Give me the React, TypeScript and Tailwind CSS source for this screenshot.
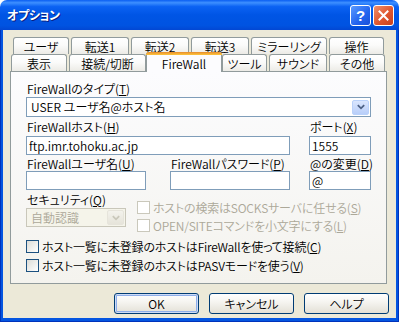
import React from "react";

const font = "font-['Noto_Sans_CJK_JP','Noto_Sans_CJK_SC',sans-serif] [font-feature-settings:'palt'] font-[350]";

function Tab({ label, w }: { label: React.ReactNode; w: string }) {
  return (
    <div
      className={`${w} h-[17px] shrink-0 border border-b-0 border-[#919B9C] rounded-t-[3px] bg-[linear-gradient(#FFFFFF,#FBFBFA_45%,#ECEBE6)] flex items-center justify-center text-[12px] leading-[14px] text-black pt-[1px]`}
    >
      {label}
    </div>
  );
}

function ActiveTab({ label, w }: { label: string; w: string }) {
  return (
    <div className={`${w} h-[20px] shrink-0 relative top-[1px] z-10 flex flex-col bg-[#FCFCFE] border-x border-[#919B9C] rounded-t-[3px]`}>
      <div className="h-[3px] -mx-px rounded-t-[3px] bg-[linear-gradient(#E68B2C,#FFC73C)]" />
      <div className="flex-1 flex items-center justify-center text-[12px] leading-[14px] text-black">{label}</div>
    </div>
  );
}

function Arrow({ disabled }: { disabled?: boolean }) {
  return (
    <div
      className={`w-[17px] h-[15px] my-auto mr-[1px] rounded-[2px] border flex items-center justify-center ${
        disabled
          ? "border-[#E6E4DB] bg-[linear-gradient(#F3F2EC,#E6E4DA)]"
          : "border-[#B9D1FA] bg-[linear-gradient(#DAE6FE,#B8CEF9)]"
      }`}
    >
      <svg width="8" height="6" viewBox="0 0 8 6">
        <path
          d="M0.8 1.2 L4 4.3 L7.2 1.2"
          fill="none"
          stroke={disabled ? "#C9C7BA" : "#4D6185"}
          strokeWidth="1.8"
        />
      </svg>
    </div>
  );
}

function Label({ children, disabled }: { children: React.ReactNode; disabled?: boolean }) {
  return (
    <div className={`h-[14px] pl-px text-[12px] leading-[14px] whitespace-nowrap ${disabled ? "text-[#ACA899]" : "text-black"}`}>
      {children}
    </div>
  );
}

function Edit({ w, value }: { w: string; value?: string }) {
  return (
    <div className={`${w} h-[19px] border border-[#7F9DB9] bg-white pl-[2px] text-[12px] leading-[17px] text-black whitespace-nowrap`}>
      {value}
    </div>
  );
}

function Check({ children, disabled }: { children: React.ReactNode; disabled?: boolean }) {
  return (
    <div className="h-[13px] flex items-center gap-[3px] whitespace-nowrap">
      <div
        className={`w-[13px] h-[13px] border ${
          disabled ? "border-[#CAC8BB] bg-white" : "border-[#1C5180] bg-[linear-gradient(135deg,#DCDCD7,#FFFFFF)]"
        }`}
      />
      <span className={`text-[12px] leading-[14px] tracking-[-0.2px] ${disabled ? "text-[#ACA899]" : "text-black"}`}>{children}</span>
    </div>
  );
}

function Button({ children, primary }: { children: React.ReactNode; primary?: boolean }) {
  return (
    <div
      className={`w-[85px] h-[21px] rounded-[3px] border border-[#003C74] bg-[linear-gradient(#FFFFFF,#F6F5F1_40%,#E3E0D6)] flex items-center justify-center text-[12px] leading-[14px] text-black ${
        primary ? "shadow-[inset_0_0_0_1px_#CEDCF6,inset_0_0_0_2px_#8EAEE9]" : ""
      }`}
    >
      {children}
    </div>
  );
}

export default function App() {
  return (
    <div className={`w-[399px] h-[322px] flex flex-col bg-white overflow-hidden ${font}`}>
      {/* title bar */}
      <div className="h-[30px] shrink-0 rounded-t-[7px] bg-[linear-gradient(#0A5EF2_0%,#3D8FFF_9%,#0B62F3_22%,#0055E5_50%,#0053E1_85%,#0247D3_100%)] flex items-center pl-[7px] pr-[5px]">
        <span className="text-white font-bold text-[12px] leading-[14px] [text-shadow:1px_1px_0_#0A1E80] tracking-[-0.3px]">
          オプション
        </span>
        <div className="ml-auto flex gap-[2px] mt-[1px]">
          <div className="w-[21px] h-[21px] rounded-[3px] border border-white bg-[linear-gradient(135deg,#5A9BFF,#2263EE_60%,#1A4FD8)] flex items-center justify-center text-white font-bold text-[15px] leading-none font-['Liberation_Sans',sans-serif]">
            ?
          </div>
          <div className="w-[21px] h-[21px] rounded-[3px] border border-white bg-[linear-gradient(135deg,#F0906C,#E0562F_55%,#C8401C)] flex items-center justify-center">
            <svg width="11" height="11" viewBox="0 0 11 11">
              <path d="M1.5 1.5 L9.5 9.5 M9.5 1.5 L1.5 9.5" stroke="white" strokeWidth="2" strokeLinecap="square" />
            </svg>
          </div>
        </div>
      </div>

      {/* frame */}
      <div className="flex-1 flex bg-[#0455E0] border-x border-b border-[#0033BB] px-[2px] pb-[3px]">
        <div className="flex-1 bg-[#ECE9D8] flex flex-col pt-[7px] px-[7px] pb-[4px]">
          {/* tabs row 1 */}
          <div className="flex gap-[2px] ml-[3px] h-[17px]">
            <Tab label="ユーザ" w="w-[56px]" />
            <Tab label="転送1" w="w-[58px]" />
            <Tab label="転送2" w="w-[58px]" />
            <Tab label="転送3" w="w-[58px]" />
            <Tab label="ミラーリング" w="w-[76px]" />
            <Tab label="操作" w="w-[55px]" />
          </div>
          {/* tabs row 2 */}
          <div className="flex items-end ml-px h-[17px]">
            <Tab label="表示" w="w-[56px]" />
            <div className="w-[2px]" />
            <Tab label="接続/切断" w="w-[77px]" />
            <ActiveTab label="FireWall" w="w-[76px]" />
            <Tab label="ツール" w="w-[45px]" />
            <div className="w-[2px]" />
            <Tab label="サウンド" w="w-[58px]" />
            <div className="w-[2px]" />
            <Tab label="その他" w="w-[56px]" />
          </div>

          {/* panel */}
          <div className="h-[213px] w-[377px] border border-[#919B9C] bg-[linear-gradient(#FCFCFE,#F4F3EE)] px-[15px] pt-[10px] flex flex-col">
            <Label>
              FireWallのタイプ(<u>T</u>)
            </Label>
            <div className="mt-px h-[20px] border border-[#7F9DB9] bg-white flex">
              <span className="flex-1 pl-[4px] text-[12px] leading-[18px] text-black">USER ユーザ名@ホスト名</span>
              <Arrow />
            </div>

            <div className="mt-[3px] flex">
              <div className="flex flex-col">
                <Label>
                  FireWallホスト(<u>H</u>)
                </Label>
                <div className="mt-[2px]">
                  <Edit w="w-[264px]" value="ftp.imr.tohoku.ac.jp" />
                </div>
              </div>
              <div className="ml-[19px] flex flex-col">
                <Label>
                  ポート(<u>X</u>)
                </Label>
                <div className="mt-[2px]">
                  <Edit w="w-[62px]" value="1555" />
                </div>
              </div>
            </div>

            <div className="mt-[2px] flex">
              <div className="flex flex-col">
                <Label>
                  FireWallユーザ名(<u>U</u>)
                </Label>
                <Edit w="w-[120px]" />
              </div>
              <div className="ml-[24px] flex flex-col">
                <Label>
                  FireWallパスワード(<u>P</u>)
                </Label>
                <Edit w="w-[120px]" />
              </div>
              <div className="ml-[19px] flex flex-col">
                <Label>
                  @の変更(<u>D</u>)
                </Label>
                <Edit w="w-[62px]" value="@" />
              </div>
            </div>

            <div className="mt-[3px] flex">
              <div className="flex flex-col w-[100px]">
                <Label>
                  セキュリティ(<u>Q</u>)
                </Label>
                <div className="mt-px h-[19px] border border-[#C9C7BA] bg-[#F5F4EA] flex">
                  <span className="flex-1 pl-[4px] text-[12px] leading-[17px] text-[#ACA899]">自動認識</span>
                  <Arrow disabled />
                </div>
              </div>
              <div className="ml-[11px] pt-[8px] flex flex-col gap-[5px]">
                <Check disabled>
                  ホストの検索はSOCKSサーバに任せる(<u>S</u>)
                </Check>
                <Check disabled>
                  OPEN/SITEコマンドを小文字にする(<u>L</u>)
                </Check>
              </div>
            </div>

            <div className="mt-[8px] flex flex-col gap-[6px]">
              <Check>
                ホスト一覧に未登録のホストはFireWallを使って接続(<u>C</u>)
              </Check>
              <Check>
                ホスト一覧に未登録のホストはPASVモードを使う(<u>V</u>)
              </Check>
            </div>
          </div>

          {/* buttons */}
          <div className="mt-[9px] flex justify-end gap-[10px]">
            <Button primary>OK</Button>
            <Button>キャンセル</Button>
            <Button>ヘルプ</Button>
          </div>
        </div>
      </div>
    </div>
  );
}
